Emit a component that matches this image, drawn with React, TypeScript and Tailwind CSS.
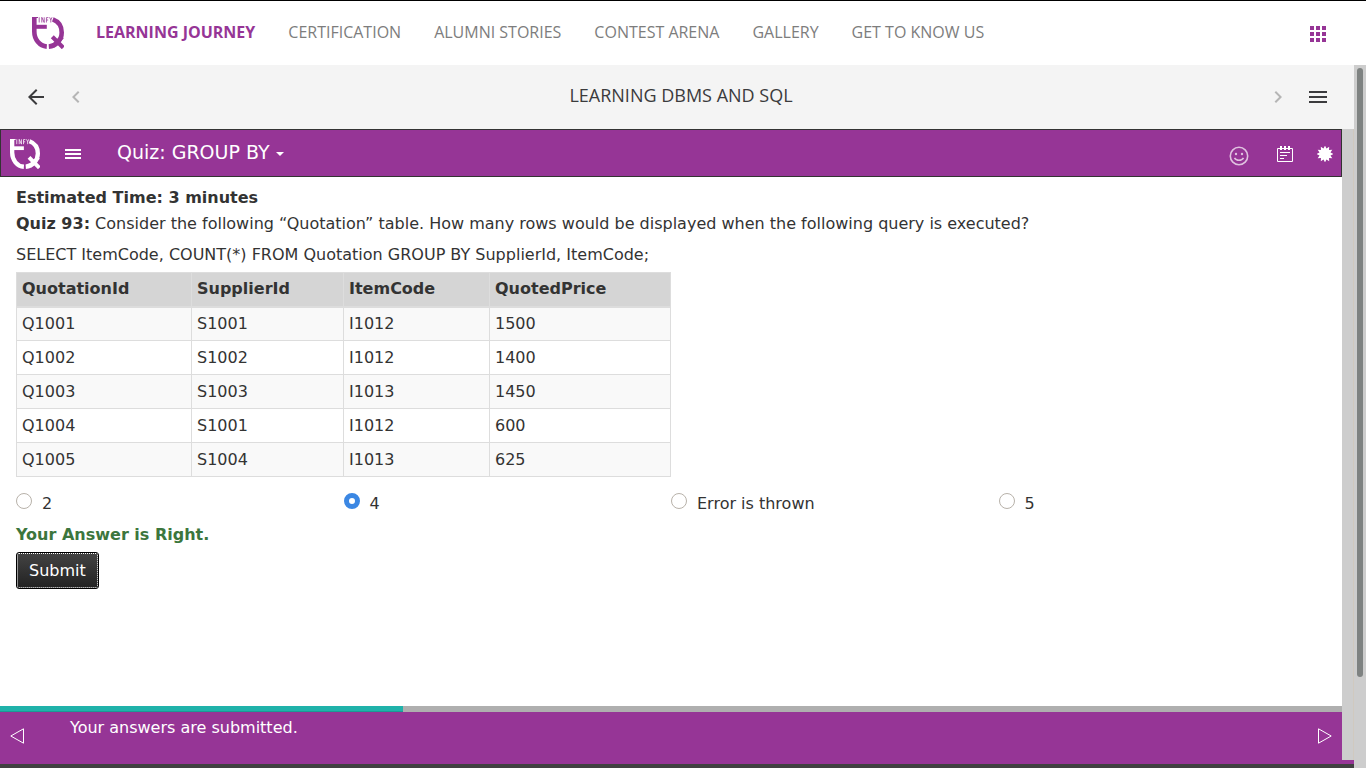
import { useState } from "react";
import { MdApps, MdArrowBack, MdChevronLeft, MdChevronRight, MdMenu } from "react-icons/md";

const navItems = ["CERTIFICATION", "ALUMNI STORIES", "CONTEST ARENA", "GALLERY", "GET TO KNOW US"];

const columns = [
  { name: "QuotationId", width: "w-[175px]" },
  { name: "SupplierId", width: "w-[152px]" },
  { name: "ItemCode", width: "w-[146px]" },
  { name: "QuotedPrice", width: "w-[181px]" },
];

const rows = [
  ["Q1001", "S1001", "I1012", "1500"],
  ["Q1002", "S1002", "I1012", "1400"],
  ["Q1003", "S1003", "I1013", "1450"],
  ["Q1004", "S1001", "I1012", "600"],
  ["Q1005", "S1004", "I1013", "625"],
];

const answers = ["2", "4", "Error is thrown", "5"];

function Logo({ className, gap }: { className: string; gap: string }) {
  return (
    <svg viewBox="0 0 32 32" className={className} fill="none" stroke="currentColor" aria-label="InfyTQ" role="img">
      <path d="M2.300 0v14.500C2.300 22.500 7.500 29 14.800 29.600" strokeWidth="4.600" />
      <path d="M2 9.800h12.800" strokeWidth="4" />
      <path d="M20.800 2.400C26.500 4.500 29.700 9.500 29.700 15.500C29.700 23 24 29 16.800 29.600" strokeWidth="4.600" />
      <path d="M18.800 18.200L24 23.400M26 29L29 32" strokeWidth="7" stroke={gap} />
      <path d="M20.300 19.700L31.300 30.700M30.300 19.700L21 29" strokeWidth="4.200" />
      <path d="M0 .5h6" strokeWidth="1" />
      <path d="M7.200 .3v5.200M9.800 5.500V.3l2.400 5.200V.3M14.400 5.500V.6h2M14.400 3h1.800M17.600 .3l1.200 2.600l1.200-2.600M18.800 2.900V5.500" strokeWidth=".8" />
    </svg>
  );
}

function SmileIcon() {
  return (
    <svg viewBox="0 0 20 20" className="size-5" fill="none" stroke="currentColor" strokeWidth="1.600" aria-hidden="true">
      <circle cx="10" cy="10" r="8.700" />
      <circle cx="7" cy="8" r="1.200" fill="currentColor" stroke="none" />
      <circle cx="13" cy="8" r="1.200" fill="currentColor" stroke="none" />
      <path d="M5.500 11.800c1.800 3.200 7.200 3.200 9 0" />
    </svg>
  );
}

function NotesIcon() {
  return (
    <svg viewBox="0 0 16 16" className="size-4" fill="none" stroke="currentColor" aria-hidden="true">
      <path d="M.5 2.500h15v13H.5z" />
      <path d="M4 0v4M8 0v4M12 0v4" strokeWidth="2" />
      <path d="M3 6.500h10M3 9.500h7M3 12.500h4" />
    </svg>
  );
}

function BurstIcon() {
  const points = Array.from({ length: 24 }, (_, i) => {
    const r = i % 2 ? 5.7 : 8.4;
    const a = (i * Math.PI) / 12;
    return `${8 + r * Math.sin(a)},${8 - r * Math.cos(a)}`;
  }).join(" ");
  return (
    <svg viewBox="0 0 16 16" className="size-4" fill="currentColor" aria-hidden="true">
      <polygon points={points} />
    </svg>
  );
}

export default function App() {
  const [answer, setAnswer] = useState("4");

  return (
    <div className="flex h-screen flex-col overflow-hidden border-t border-black bg-white font-['DejaVu_Sans',sans-serif] text-base text-[#333]">
      <header className="flex h-16 shrink-0 items-center pr-9 pl-8 font-['Open_Sans',sans-serif]">
        <Logo className="size-8 text-[#963596]" gap="#fff" />
        <nav className="ml-8 flex flex-1 items-center gap-[33px] pb-0.5 leading-6 whitespace-nowrap text-[#7d7d7d]">
          <a href="#journey" className="font-bold text-[#963596]">LEARNING JOURNEY</a>
          {navItems.map((item) => (
            <a key={item} href="#top">{item}</a>
          ))}
        </nav>
        <button aria-label="Apps" className="pt-0.5 text-[#963596]"><MdApps className="size-6" /></button>
      </header>

      <div className="flex min-h-0 flex-1">
        <div className="flex min-w-0 flex-1 flex-col">
          <div className="flex h-16 shrink-0 items-center bg-[#f4f4f4] px-6 text-[#3b3b3d]">
            <button aria-label="Back"><MdArrowBack className="size-6" /></button>
            <button aria-label="Previous" className="ml-4 text-[#b5b5b5]"><MdChevronLeft className="size-6" /></button>
            <h1 className="flex-1 pb-1 pl-2 text-center font-['Open_Sans',sans-serif] text-lg leading-6">LEARNING DBMS AND SQL</h1>
            <button aria-label="Next" className="mr-4 text-[#b5b5b5]"><MdChevronRight className="size-6" /></button>
            <button aria-label="Contents"><MdMenu className="size-6" /></button>
          </div>

          <div className="flex min-h-0 flex-1 flex-col border-b-4 border-[#404040] bg-[#963596]">
            <div className="flex min-h-0 flex-1">
              <div className="flex min-w-0 flex-1 flex-col">
                <div className="flex h-12 shrink-0 items-center border border-[#333] px-2 pt-0.5 text-white">
                  <Logo className="ml-px size-[30px]" gap="#963596" />
                  <button aria-label="Menu" className="ml-[25px]">
                    <svg viewBox="0 0 16 10" className="h-[10px] w-4" fill="currentColor" aria-hidden="true">
                      <path d="M0 0h16v2H0zM0 4h16v2H0zM0 8h16v2H0z" />
                    </svg>
                  </button>
                  <button className="ml-9 flex items-center gap-1.5 pb-1 text-[19px] leading-6">
                    Quiz: GROUP BY
                    <svg viewBox="0 0 8 4" className="mt-1 h-1 w-2" fill="currentColor" aria-hidden="true"><path d="M0 0h8L4 4z" /></svg>
                  </button>
                  <div className="ml-auto flex items-center">
                    <button aria-label="Feedback" className="mr-7 pt-1 text-white/70"><SmileIcon /></button>
                    <button aria-label="Notes" className="mr-6"><NotesIcon /></button>
                    <button aria-label="Settings"><BurstIcon /></button>
                  </div>
                </div>

                <main className="min-h-0 flex-1 overflow-hidden bg-white px-4 pt-[9px]">
                  <p className="leading-6 font-bold">Estimated Time: 3 minutes</p>
                  <p className="mt-0.5 leading-6"><b>Quiz 93:</b> Consider the following “Quotation” table. How many rows would be displayed when the following query is executed?</p>
                  <p className="mt-[7px] leading-6">SELECT ItemCode, COUNT(*) FROM Quotation GROUP BY SupplierId, ItemCode;</p>
                  <table className="mt-[5px] table-fixed border-collapse text-left">
                    <thead>
                      <tr className="h-[34px] bg-[#d5d5d5]">
                        {columns.map((c) => (
                          <th key={c.name} className={`${c.width} border border-b-2 border-[#ddd] px-[5px] py-0 leading-6`}>{c.name}</th>
                        ))}
                      </tr>
                    </thead>
                    <tbody>
                      {rows.map((row) => (
                        <tr key={row[0]} className="h-[34px] odd:bg-[#f9f9f9]">
                          {row.map((cell, i) => (
                            <td key={i} className="border border-[#ddd] px-[5px] py-0 leading-6">{cell}</td>
                          ))}
                        </tr>
                      ))}
                    </tbody>
                  </table>
                  <div className="mt-[15px] grid grid-cols-4">
                    {answers.map((a) => (
                      <label key={a} className="flex items-start gap-2.5 leading-6">
                        <input
                          type="radio"
                          name="answer"
                          checked={answer === a}
                          onChange={() => setAnswer(a)}
                          className="mt-px size-4 appearance-none rounded-full border border-[#b8b2aa] bg-white checked:border-[5px] checked:border-[#3b87e3]"
                        />
                        {a}
                      </label>
                    ))}
                  </div>
                  <p className="mt-[7px] leading-6 font-bold text-[#3c763d]">Your Answer is Right.</p>
                  <button className="mt-[5px] block rounded-[3px] border border-black bg-linear-to-b from-[#444] to-[#222] text-white">
                    <span className="block rounded-[2px] border border-dotted border-white px-[11px] py-[5px] leading-[23px]">Submit</span>
                  </button>
                </main>

                <div className="h-1.5 shrink-0 bg-[#afafaf]">
                  <div className="h-full w-[30%] border-b border-[#1b9a95] bg-[#20b2aa]" />
                </div>
                <footer className="flex h-12 shrink-0 items-center px-[10px] text-white">
                  <button aria-label="Previous page">
                    <svg viewBox="0 0 14 16" className="h-4 w-[14px]" fill="none" stroke="currentColor" aria-hidden="true"><path d="M13.500.8v14.400L.8 8z" /></svg>
                  </button>
                  <p className="flex-1 self-start pt-1 pl-[46px] leading-6">Your answers are submitted.</p>
                  <button aria-label="Next page">
                    <svg viewBox="0 0 14 16" className="h-4 w-[14px]" fill="none" stroke="currentColor" aria-hidden="true"><path d="M.5.800v14.400L13.200 8z" /></svg>
                  </button>
                </footer>
              </div>
              <div className="w-3 shrink-0 border-r border-[#d0c9bf] bg-[#cdcdcd]" />
            </div>
            <div className="h-1 shrink-0" />
          </div>
        </div>
        <div className="w-3 shrink-0 bg-[#cdcdcd] px-[3px] pt-[3px]">
          <div className="h-[87%] rounded-full bg-[#7e8281]" />
        </div>
      </div>
    </div>
  );
}
